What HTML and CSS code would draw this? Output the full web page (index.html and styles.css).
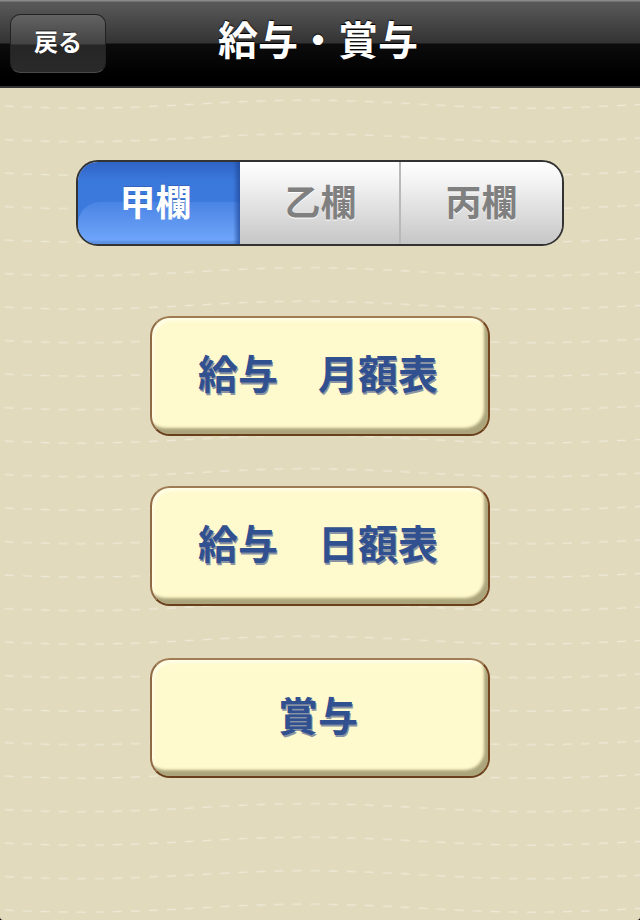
FILE: index.html
```html
<!DOCTYPE html>
<html lang="ja">
<head>
<meta charset="utf-8">
<title>給与・賞与</title>
<link rel="stylesheet" href="styles.css">
</head>
<body>
<div class="page">
  <svg class="stitches" width="640" height="920" aria-hidden="true">
    <defs>
      <pattern id="stitch" patternUnits="userSpaceOnUse" width="450" height="33.5" patternTransform="translate(0 87.45)">
        <path d="M-143 12.75C-61 12.75 1 20.75 82 20.75C164 20.75 225 12.75 307 12.75C389 12.75 450 20.75 532 20.75" fill="none" stroke="#f5f1e4" stroke-opacity=".7" stroke-width="1.2" stroke-dasharray="9 9" stroke-dashoffset="14"/>
      </pattern>
    </defs>
    <rect width="640" height="920" fill="url(#stitch)"/>
  </svg>
  <header class="navbar">
    <button class="back">戻る</button>
    <h1 class="title">給与・賞与</h1>
  </header>
  <main class="content">
    <div class="segmented">
      <div class="seg seg-on">甲欄</div>
      <div class="seg seg-mid">乙欄</div>
      <div class="seg seg-end">丙欄</div>
    </div>
    <nav class="menu">
      <button class="menu-btn">給与　月額表</button>
      <button class="menu-btn">給与　日額表</button>
      <button class="menu-btn menu-btn-last">賞与</button>
    </nav>
  </main>
</div>
</body>
</html>
```
FILE: styles.css
```css
* { box-sizing: border-box; }
html, body { margin: 0; padding: 0; background: #000; }
body { font-family: "Noto Sans CJK JP", "Liberation Sans", sans-serif; }
.page {
  position: relative;
  width: 640px;
  height: 920px;
  overflow: hidden;
  background: #e1dabd;
  border-radius: 0 0 3px 3px;
}
.stitches { position: absolute; left: 0; top: 0; }
.navbar {
  position: relative;
  height: 88px;
  padding: 14px 0 0 10px;
  display: flex;
  align-items: flex-start;
  background: linear-gradient(#8a8a8a 0, #8a8a8a 1px, #5a5a5a 2px, #333 43px, #0c0c0c 44px, #000 76px);
  border-bottom: 2px solid #333;
}
.back {
  width: 96px;
  height: 59px;
  padding: 0 0 5px;
  border: 1px solid #222;
  border-bottom-color: #4a4a4a;
  border-radius: 10px;
  background: linear-gradient(#636363 0, #434343 29px, #262626 30px, #2a2a2a 100%);
  color: #fff;
  font: 700 24px/1 "Noto Sans CJK JP", sans-serif;
  text-shadow: 0 -1px 0 #222;
}
.title {
  flex: 0 0 auto;
  margin: -6px 0 0 112px;
  color: #fff;
  font-size: 40px;
  line-height: 60px;
  font-weight: 700;
  text-shadow: 0 -1px 1px #000;
}
.content {
  position: relative;
  display: flex;
  flex-direction: column;
  align-items: center;
  padding-top: 72px;
}
.segmented {
  display: flex;
  width: 488px;
  height: 86px;
  border: 2px solid #333;
  border-radius: 22px;
  overflow: hidden;
  background: #ccc;
}
.seg {
  display: flex;
  align-items: center;
  justify-content: center;
  padding-bottom: 6px;
  font-size: 36px;
  font-weight: 700;
  color: #808080;
  text-shadow: 0 1px 0 #fff;
  background: linear-gradient(#fff, #f0f0f0 30%, #c6c6c6);
}
.seg-on {
  position: relative;
  z-index: 0;
  width: 162px;
  padding-right: 7px;
  color: #fff;
  text-shadow: 0 -1px 0 #3566bb;
  background:
    linear-gradient(90deg, transparent 155px, rgba(30,70,150,.65) 161px),
    linear-gradient(#2f64c4 0, #3b78dc 18px, #3f7ce0 100%);
}
.seg-on::before {
  content: "";
  position: absolute;
  z-index: -1;
  left: 0;
  right: 0;
  top: 40px;
  bottom: 0;
  border-radius: 22px 0 0 0;
  background:
    linear-gradient(90deg, transparent 155px, rgba(30,70,150,.65) 161px),
    linear-gradient(#4a84e4 0, #6ea5fa 38px, #5c90e0 40px);
}
.seg-mid { width: 161px; padding-left: 2px; border-right: 2px solid #b9b9b9; }
.seg-end { flex: 1; }
.menu {
  display: flex;
  flex-direction: column;
  gap: 50px;
  margin-top: 70px;
}
.menu-btn {
  display: block;
  width: 340px;
  height: 120px;
  padding: 0 4px 9px 0;
  border: 2px solid;
  border-color: #a07c55 #74451f #6a3f1c #8f6a45;
  border-radius: 20px;
  background: #fffacd;
  box-shadow: inset -5px -7px 3px -1px #aca57c, inset 2px 3px 3px #fffde6;
  color: #31508f;
  font: 700 40px/1 "Noto Sans CJK JP", sans-serif;
  text-shadow: 1px 2px 0 #8a93a3;
}
.menu-btn-last { margin-top: 2px; }
```
